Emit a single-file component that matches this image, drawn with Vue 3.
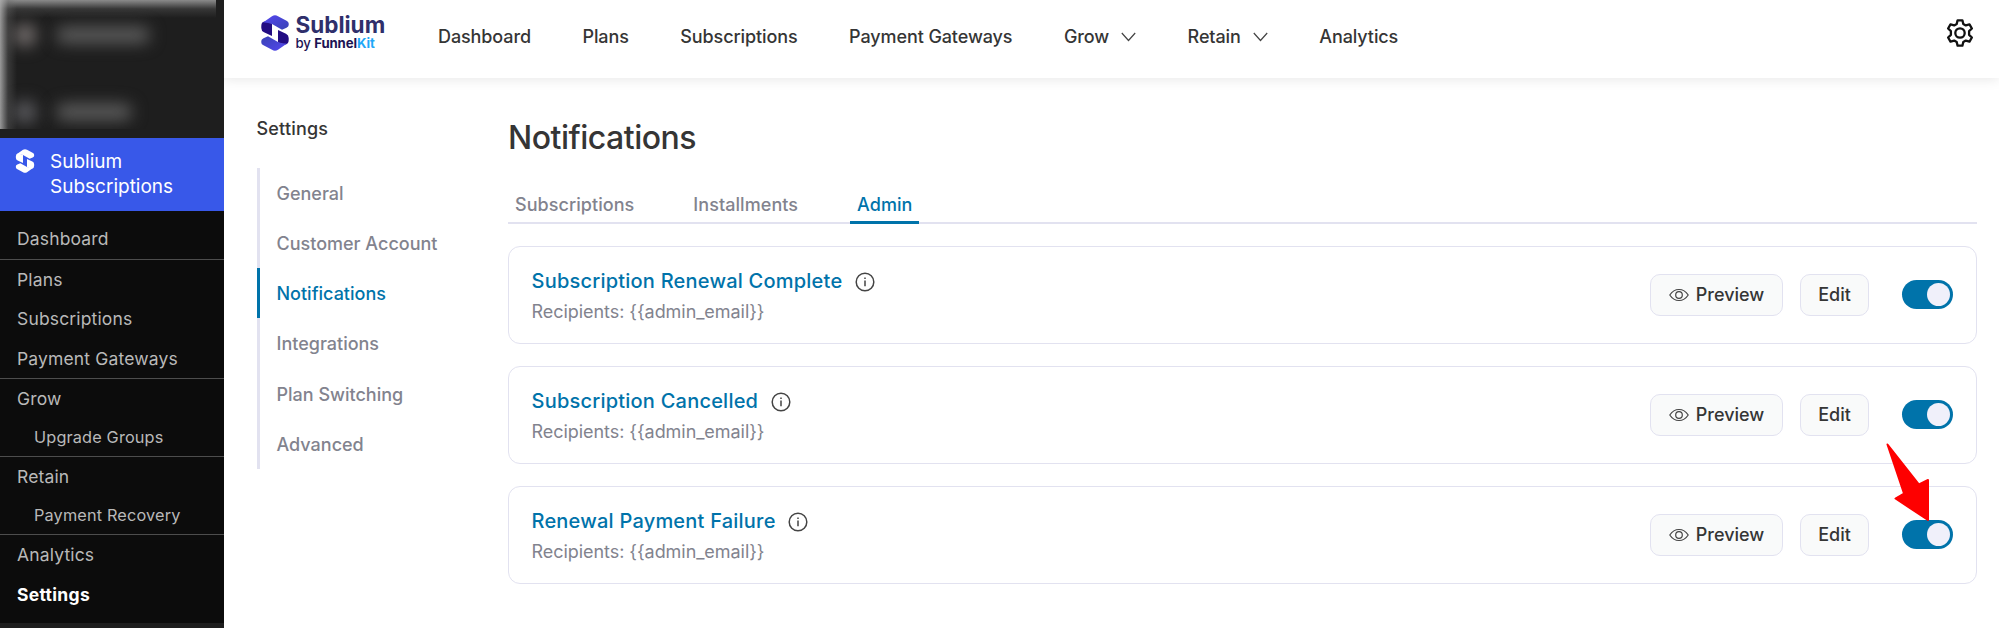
<template>
  <div class="app">
    <aside class="sidebar">
      <div class="hidden-menu" aria-hidden="true">
        <div class="hidden-row"><i class="spot"></i><i class="smear"></i></div>
        <div class="hidden-row second"><i class="spot"></i><i class="smear short"></i></div>
      </div>
      <a class="menu-current">
        <svg class="menu-logo" viewBox="0 0 28 36">
          <path :d="logoTop" />
          <path :d="logoLeft" />
          <g transform="rotate(180 14 18)">
            <path :d="logoTop" />
            <path :d="logoLeft" />
          </g>
        </svg>
        <span>Sublium<br />Subscriptions</span>
      </a>
      <div class="submenu">
        <ul v-for="(group, i) in menuGroups" :key="i">
          <li
            v-for="item in group"
            :key="item.label"
            :class="{ child: item.child, current: item.current }"
          >
            {{ item.label }}
          </li>
        </ul>
      </div>
    </aside>

    <div class="page">
      <header class="topbar">
        <div class="brand">
          <svg class="brand-logo" viewBox="0 0 28 36">
            <defs>
              <linearGradient id="brand-light" x1="0" y1="0" x2="1" y2="1">
                <stop offset="0" stop-color="#5547f0" />
                <stop offset="1" stop-color="#3943b4" />
              </linearGradient>
            </defs>
            <path :d="logoLeft" fill="#220c82" />
            <path :d="logoTop" fill="url(#brand-light)" />
            <g transform="rotate(180 14 18)">
              <path :d="logoLeft" fill="#220c82" />
              <path :d="logoTop" fill="url(#brand-light)" />
            </g>
          </svg>
          <div class="brand-text">
            <div class="brand-name">Sublium</div>
            <div class="brand-by">by <b>Funnel</b><b class="kit">Kit</b></div>
          </div>
        </div>
        <nav class="topnav">
          <a v-for="link in topLinks" :key="link.label">
            {{ link.label }}
            <svg v-if="link.menu" class="chevron" viewBox="0 0 15 10">
              <path d="M.8 1l6.700 7.500L14.200 1" />
            </svg>
          </a>
        </nav>
        <svg class="gear" viewBox="0 0 28 28">
          <path :d="gearPath" />
          <circle cx="14" cy="14" r="4.700" />
        </svg>
      </header>

      <div class="body">
        <nav class="settings">
          <h2>Settings</h2>
          <ul>
            <li
              v-for="item in settings"
              :key="item"
              :class="{ active: item === 'Notifications' }"
            >
              {{ item }}
            </li>
          </ul>
        </nav>

        <main class="content">
          <h1>Notifications</h1>
          <div class="tabs">
            <button
              v-for="tab in tabs"
              :key="tab"
              class="tab"
              :class="{ active: tab === activeTab }"
              @click="activeTab = tab"
            >
              {{ tab }}
            </button>
          </div>

          <section v-for="card in cards" :key="card.title" class="card">
            <div class="card-info">
              <div class="card-title">
                {{ card.title }}
                <svg class="info" viewBox="0 0 20 20">
                  <circle cx="10" cy="10" r="8.800" />
                  <path d="M10 8.600v5.600M10 5.600v1.500" />
                </svg>
              </div>
              <div class="card-recipients">Recipients: {{ recipient }}</div>
            </div>
            <button class="btn preview">
              <svg class="eye" viewBox="0 0 20 14">
                <path d="M.8 7C3 3.600 6.300 1.500 10 1.500S17 3.600 19.200 7C17 10.400 13.700 12.500 10 12.500S3 10.400.8 7z" />
                <circle cx="10" cy="7" r="3.300" />
              </svg>
              Preview
            </button>
            <button class="btn edit">Edit</button>
            <button
              class="toggle"
              :class="{ on: card.enabled }"
              role="switch"
              :aria-checked="card.enabled"
              @click="card.enabled = !card.enabled"
            ></button>
          </section>
        </main>
      </div>
    </div>

    <svg class="pointer" viewBox="0 0 44 78">
      <path d="M1.500 1.500L33 41.500L42 37V77L9.500 55.500L18 50.500z" />
    </svg>
  </div>
</template>

<script setup>
import { ref } from 'vue';

const logoTop =
  'M2 7.500L11 1.200Q14-.6 17 1.200L26 6Q27.700 7 27.700 8.500V10Q27.700 11.800 25.500 12.800L21 14.800L11 9Q6 7 2 7.500z';
const logoLeft =
  'M.3 11Q.3 7 3.500 6.600Q6.500 6.800 11 8.500V21L3 17.200Q.3 16 .3 13z';

// six rounded teeth around the hub
const gearPath =
  'M11.600 1.300h4.800l.9 3.700 2.500 1.450 3.700-1.100 2.400 4.150-2.800 2.700v3.600l2.800 2.700-2.400 4.150-3.700-1.100-2.500 1.450-.9 3.700h-4.800l-.9-3.700-2.500-1.450-3.700 1.100-2.400-4.150 2.800-2.700v-3.600l-2.800-2.700 2.400-4.150 3.700 1.100 2.500-1.450z';

const menuGroups = [
  [{ label: 'Dashboard' }],
  [{ label: 'Plans' }, { label: 'Subscriptions' }, { label: 'Payment Gateways' }],
  [{ label: 'Grow' }, { label: 'Upgrade Groups', child: true }],
  [{ label: 'Retain' }, { label: 'Payment Recovery', child: true }],
  [{ label: 'Analytics' }, { label: 'Settings', current: true }],
];

const topLinks = [
  { label: 'Dashboard' },
  { label: 'Plans' },
  { label: 'Subscriptions' },
  { label: 'Payment Gateways' },
  { label: 'Grow', menu: true },
  { label: 'Retain', menu: true },
  { label: 'Analytics' },
];

const settings = [
  'General',
  'Customer Account',
  'Notifications',
  'Integrations',
  'Plan Switching',
  'Advanced',
];

const tabs = ['Subscriptions', 'Installments', 'Admin'];
const activeTab = ref('Admin');

const recipient = '{{admin_email}}';
const cards = ref([
  { title: 'Subscription Renewal Complete', enabled: true },
  { title: 'Subscription Cancelled', enabled: true },
  { title: 'Renewal Payment Failure', enabled: true },
]);
</script>

<style>
body {
  background: #fff;
}
</style>

<style scoped>
.app {
  position: relative;
  display: flex;
  height: 628px;
  overflow: hidden;
  font-family: Inter, 'Liberation Sans', sans-serif;
  font-size: 18px;
  color: #353535;
}

ul,
h1,
h2 {
  margin: 0;
  padding: 0;
  list-style: none;
}

button {
  font: inherit;
  letter-spacing: inherit;
  color: inherit;
  border: none;
  background: none;
  padding: 0;
}

.sidebar {
  width: 223.5px;
  flex-shrink: 0;
  background: #1e1e1e;
  color: #b9b9b9;
}

.hidden-menu {
  width: 216px;
  height: 128.5px;
  margin-bottom: 9px;
  overflow: hidden;
  background:
    linear-gradient(to right, rgba(175, 175, 175, 0.85), rgba(110, 110, 110, 0.35) 8px, transparent 17px),
    linear-gradient(to bottom, rgba(175, 175, 175, 0.75), rgba(110, 110, 110, 0.3) 9px, transparent 18px);
}

.hidden-row {
  display: flex;
  align-items: center;
  height: 20px;
  padding: 25px 0 0 14px;
  gap: 20px;
}

.hidden-row.second {
  padding-top: 57px;
}

.spot,
.smear {
  filter: blur(8px);
  border-radius: 9px;
  background: #76706f;
}

.spot {
  width: 22px;
  height: 22px;
}

.second .spot {
  background: #5c5c60;
}

.smear {
  width: 94px;
  height: 16px;
  background: #5e5e5e;
}

.smear.short {
  width: 76px;
}

.menu-current {
  display: flex;
  box-sizing: border-box;
  height: 73.5px;
  padding: 11.5px 0 0 15px;
  gap: 15px;
  background: #3858e9;
  color: #fff;
  font-size: 19px;
  line-height: 25px;
}

.menu-logo {
  width: 20px;
  height: 24px;
  fill: #fff;
}

.submenu {
  box-sizing: border-box;
  height: 412px;
  padding-top: 8px;
  background: #0c0c0c;
}

.submenu ul + ul {
  border-top: 1px solid #4d4d4d;
}

.submenu li {
  height: 39.5px;
  line-height: 39.5px;
  padding-left: 17px;
  font-size: 17.5px;
  letter-spacing: 0.15px;
}

.submenu li.child {
  height: 37.5px;
  line-height: 37.5px;
  padding-left: 34px;
  font-size: 16.3px;
}

.submenu li.current {
  color: #fff;
  font-weight: 700;
  letter-spacing: 0.3px;
}

.page {
  flex: 1;
  min-width: 0;
  margin-left: -0.5px;
}

.topbar {
  display: flex;
  align-items: center;
  box-sizing: border-box;
  height: 78px;
  padding: 0 25px 12px 37.5px;
  box-shadow: 0 1px 12px rgba(0, 0, 0, 0.1);
  clip-path: inset(0 0 -20px 0);
}

.brand {
  display: flex;
  gap: 7px;
  width: 177.5px;
}

.brand-logo {
  width: 28px;
  height: 36px;
}

.brand-name {
  font-size: 22.5px;
  line-height: 19px;
  font-weight: 700;
  color: #2f2f6b;
}

.brand-by {
  font-size: 13.2px;
  line-height: 18px;
  letter-spacing: -0.1px;
  color: #1c1354;
  font-weight: 500;
}

.kit {
  color: #1fa8f8;
}

.topnav {
  display: flex;
  flex: 1;
  gap: 51.5px;
  padding-top: 7px;
  font-weight: 500;
  letter-spacing: -0.1px;
}

.topnav a {
  display: flex;
  align-items: center;
  gap: 12px;
}

.chevron {
  width: 15px;
  height: 10px;
  fill: none;
  stroke: #444;
  stroke-width: 1.2;
}

.gear {
  width: 28px;
  height: 28px;
  fill: none;
  stroke: #111;
  stroke-width: 2.3;
  stroke-linejoin: round;
}

.body {
  display: flex;
  padding: 0 22px 0 33.5px;
}

.settings {
  width: 251.5px;
  padding-top: 38px;
  font-weight: 500;
}

.settings h2 {
  font-size: 18px;
  font-weight: 500;
  line-height: 26px;
  margin-bottom: 25.5px;
  letter-spacing: 0.2px;
}

.settings li {
  box-sizing: border-box;
  height: 50.25px;
  line-height: 50.25px;
  padding: 1px 0 0 17px;
  border-left: 3px solid #e2e2f0;
  color: #82838e;
}

.settings li.active {
  color: #0073aa;
  border-color: #0073aa;
}

.content {
  flex: 1;
  padding-top: 40px;
}

h1 {
  font-size: 32px;
  line-height: 40px;
  font-weight: 500;
  letter-spacing: -0.5px;
}

.tabs {
  display: flex;
  gap: 45px;
  height: 63.5px;
  align-items: flex-end;
  margin-bottom: 22px;
  border-bottom: 2px solid #e2e2f0;
  color: #82838e;
  font-weight: 500;
  letter-spacing: 0.06px;
}

.tab {
  height: 36px;
  margin-bottom: -2px;
  padding: 1px 7px 0;
  border-bottom: 3px solid transparent;
}

.tab.active {
  color: #0073aa;
  border-color: #0073aa;
}

.card {
  display: flex;
  align-items: center;
  box-sizing: border-box;
  height: 98px;
  margin-bottom: 22px;
  padding: 0 23px 0 22.5px;
  border: 1.5px solid #e2e2f0;
  border-radius: 12px;
}

.card-info {
  flex: 1;
  padding-top: 4px;
}

.card-title {
  display: flex;
  align-items: center;
  gap: 12.5px;
  font-size: 20px;
  line-height: 31px;
  font-weight: 500;
  letter-spacing: 0.22px;
  color: #0073aa;
}

.info {
  width: 20px;
  height: 20px;
  margin-top: 1px;
  fill: none;
  stroke: #444;
  stroke-width: 1.5;
}

.card-recipients {
  line-height: 30px;
  letter-spacing: -0.05px;
  color: #82838e;
}

.btn {
  display: flex;
  align-items: center;
  justify-content: center;
  box-sizing: border-box;
  height: 42px;
  border: 1.5px solid #e2e2f0;
  border-radius: 10px;
  background: #f9fafa;
  font-weight: 500;
}

.preview {
  width: 133px;
  gap: 7px;
  margin-right: 17px;
}

.edit {
  width: 69px;
  margin-right: 33px;
}

.eye {
  width: 20px;
  height: 14px;
  fill: none;
  stroke: #444;
  stroke-width: 1.2;
}

.toggle {
  display: flex;
  align-items: center;
  box-sizing: border-box;
  width: 51px;
  height: 29px;
  padding: 0 3px;
  border-radius: 15px;
  background: #b5b5c3;
}

.toggle::before {
  content: '';
  width: 23px;
  height: 23px;
  border-radius: 50%;
  background: #f0f0fa;
}

.toggle.on {
  justify-content: flex-end;
  background: #0073aa;
}

/* callout drawn over the last card */
.pointer {
  position: absolute;
  left: 1886px;
  top: 443px;
  width: 44px;
  height: 78px;
  fill: #fe0000;
  stroke: #fe0000;
  stroke-width: 2;
  stroke-linejoin: round;
}
</style>
